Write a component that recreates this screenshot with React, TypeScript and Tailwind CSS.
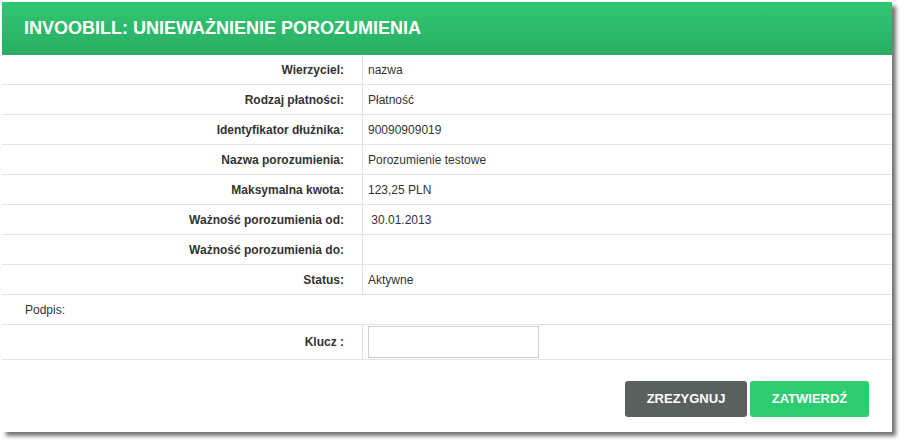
const rows: [string, string][] = [
  ['Wierzyciel:', 'nazwa'],
  ['Rodzaj płatności:', 'Płatność'],
  ['Identyfikator dłużnika:', '90090909019'],
  ['Nazwa porozumienia:', 'Porozumienie testowe'],
  ['Maksymalna kwota:', '123,25 PLN'],
  ['Ważność porozumienia od:', ' 30.01.2013'],
  ['Ważność porozumienia do:', ''],
  ['Status:', 'Aktywne'],
];

export default function App() {
  return (
    <div className="w-[906px] h-[448px] bg-white p-[2px] font-['Liberation_Sans',Arial,sans-serif] text-[12px] text-[#333]">
      <div className="w-[890px] h-[430px] bg-white flex flex-col shadow-[4px_4px_4px_rgba(0,0,0,0.55)]">
        <div className="h-[53px] flex items-center pl-[22px] bg-gradient-to-b from-[#30c873] to-[#2aad62]">
          <h1 className="text-white font-bold text-[18px]">INVOOBILL: UNIEWAŻNIENIE POROZUMIENIA</h1>
        </div>
        {rows.map(([label, value]) => (
          <div key={label} className="flex h-[30px] border-b border-[#e3e3e3]">
            <div className="w-[361px] flex items-center justify-end pr-[18px] font-bold border-r border-[#e3e3e3]">
              {label}
            </div>
            <div className="flex items-center pl-[5px] whitespace-pre">{value}</div>
          </div>
        ))}
        <div className="flex items-center h-[30px] pl-[23px] border-b border-[#e3e3e3]">Podpis:</div>
        <div className="flex h-[35px] border-b border-[#e3e3e3]">
          <div className="w-[361px] flex items-center justify-end pr-[18px] font-bold border-r border-[#e3e3e3]">
            Klucz :
          </div>
          <div className="flex items-center pl-[5px]">
            <input type="password" className="w-[171px] h-[32px] border border-[#cfcfcf] bg-white outline-none" />
          </div>
        </div>
        <div className="flex justify-end gap-[3px] pr-[23px] pt-[21px]">
          <button className="w-[122px] h-[36px] rounded-[3px] bg-[#5a605d] text-white font-bold text-[13px]">
            ZREZYGNUJ
          </button>
          <button className="w-[119px] h-[36px] rounded-[3px] bg-[#2ecc71] text-white font-bold text-[13px]">
            ZATWIERDŹ
          </button>
        </div>
      </div>
    </div>
  );
}
